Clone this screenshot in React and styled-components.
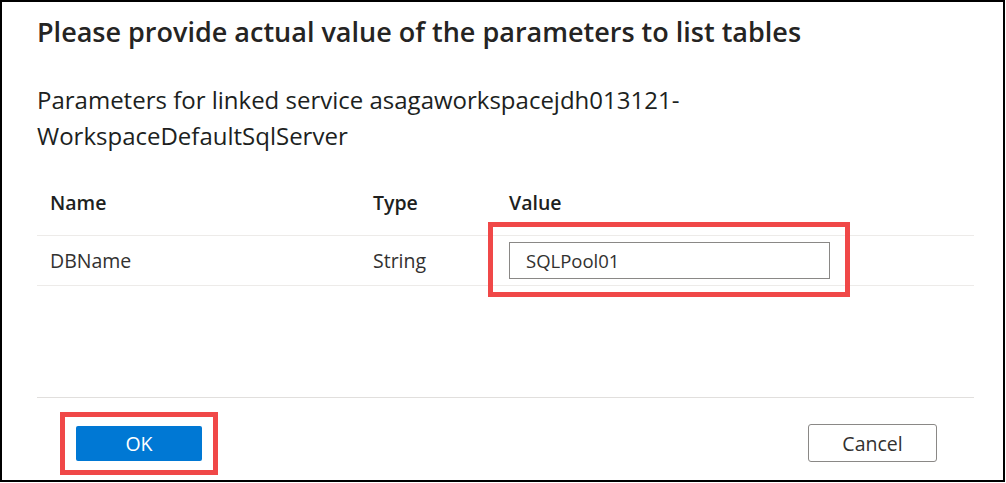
import React, { useState } from "react";
import styled, { createGlobalStyle } from "styled-components";

const GlobalStyle = createGlobalStyle`
  body {
    margin: 0;
    background: #ffffff;
    font-family: "Open Sans", "Noto Sans", sans-serif;
    color: #323130;
  }
`;

const params = [{ name: "DBName", type: "String", value: "SQLPool01" }];

function App() {
  const [values, setValues] = useState(params.map((p) => p.value));

  return (
    <>
      <GlobalStyle />
      <Frame>
        <Title>Please provide actual value of the parameters to list tables</Title>
        <Subtitle>
          Parameters for linked service asagaworkspacejdh013121-
          <br />
          WorkspaceDefaultSqlServer
        </Subtitle>
        <Table>
          <HeadCell>Name</HeadCell>
          <HeadCell>Type</HeadCell>
          <HeadCell>Value</HeadCell>
          {params.map((p, i) => (
            <React.Fragment key={p.name}>
              <Cell>{p.name}</Cell>
              <Cell>{p.type}</Cell>
              <Cell>
                <Marked $inset="-20px -20px -18px -21px">
                  <ValueInput
                    value={values[i]}
                    onChange={(e) => {
                      const next = [...values];
                      next[i] = e.target.value;
                      setValues(next);
                    }}
                  />
                </Marked>
              </Cell>
            </React.Fragment>
          ))}
        </Table>
        <Footer>
          <Marked $inset="-14px -16px">
            <PrimaryButton>OK</PrimaryButton>
          </Marked>
          <SecondaryButton>Cancel</SecondaryButton>
        </Footer>
      </Frame>
    </>
  );
}

const Frame = styled.div`
  box-sizing: border-box;
  width: 1005px;
  height: 482px;
  border: 2px solid #000000;
  padding: 0 29px 0 35px;
  display: flex;
  flex-direction: column;
`;

const Title = styled.h1`
  margin: 12px 0 0 0;
  font-size: 27px;
  line-height: 36px;
  font-weight: 600;
  color: #252423;
`;

const Subtitle = styled.p`
  margin: 32px 0 0 0;
  font-size: 24px;
  line-height: 36px;
  font-weight: 400;
  color: #201f1e;
`;

const Table = styled.div`
  margin-top: 15px;
  display: grid;
  grid-template-columns: 323px 136px 1fr;
  font-size: 19.5px;
`;

const HeadCell = styled.div`
  padding: 0 0 0 13px;
  height: 66px;
  display: flex;
  align-items: center;
  font-weight: 600;
  color: #201f1e;
  border-bottom: 1px solid #edebe9;
`;

const Cell = styled.div`
  padding: 0 0 0 13px;
  height: 49px;
  display: flex;
  align-items: center;
  color: #323130;
  border-bottom: 1px solid #edebe9;
`;

// red annotation frame drawn over the element it marks
const Marked = styled.div`
  position: relative;
  display: inline-flex;

  &::after {
    content: "";
    position: absolute;
    inset: ${(p) => p.$inset};
    border: 5px solid #f04848;
    pointer-events: none;
  }
`;

const ValueInput = styled.input`
  box-sizing: border-box;
  width: 321px;
  height: 37px;
  border: 1px solid #8a8886;
  border-radius: 0;
  padding: 0 16px;
  font-family: inherit;
  font-size: 18.5px;
  color: #323130;
  outline: none;
`;

const Footer = styled.div`
  margin-top: auto;
  margin-bottom: 18px;
  border-top: 1px solid #e1dfdd;
  padding: 26px 37px 0 39px;
  display: flex;
  justify-content: space-between;
  align-items: center;
`;

const PrimaryButton = styled.button`
  width: 126px;
  height: 35px;
  border: none;
  border-radius: 2px;
  background: #0078d4;
  color: #ffffff;
  font-family: inherit;
  font-size: 19.5px;
`;

const SecondaryButton = styled.button`
  width: 129px;
  height: 38px;
  border: 1px solid #8a8886;
  border-radius: 3px;
  background: #ffffff;
  color: #323130;
  font-family: inherit;
  font-size: 19.5px;
`;

export default App;
